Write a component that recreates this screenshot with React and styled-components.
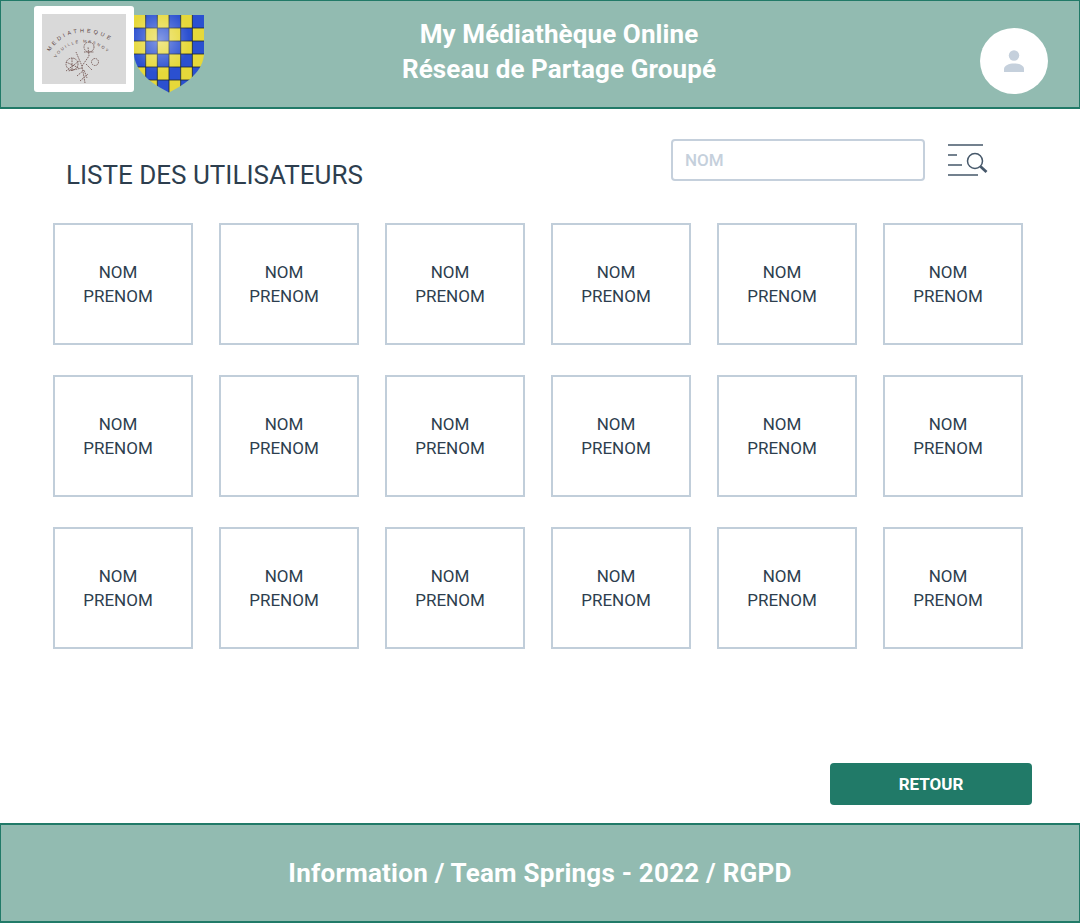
import React from "react";
import styled, { createGlobalStyle } from "styled-components";

const Global = createGlobalStyle`
  html, body { margin: 0; padding: 0; background: #fff; }
  body { font-family: Roboto, "Noto Sans", sans-serif; color: #2d3e4e; }
  * { box-sizing: border-box; }
`;
const Page = styled.div`
  width: 1080px;
  height: 924px;
  display: flex;
  flex-direction: column;
`;
const Header = styled.header`
  height: 109px;
  background: #92bbb1;
  border: 1px solid #217a68;
  border-bottom-width: 2px;
  display: flex;
  align-items: flex-start;
  padding: 5px 31px 0 33px;
`;
const LogoBox = styled.div`
  width: 100px;
  height: 86px;
  background: #fff;
  border-radius: 3px;
  padding: 8px;
  flex: none;
`;
const LogoInner = styled.svg`
  display: block;
  width: 84px;
  height: 70px;
  background: #d9d9d9;
`;
const LogoText = styled.text`
  font-family: "Liberation Sans", sans-serif;
  font-size: ${(p) => p.$size}px;
  letter-spacing: ${(p) => p.$spacing}px;
  fill: #5a4341;
`;
const Shield = styled.svg`
  display: block;
  width: 70px;
  height: 78px;
  margin-top: 9px;
  flex: none;
`;
const Title = styled.h1`
  flex: 1;
  margin: 11px 0 0;
  padding-right: 66px;
  text-align: center;
  font-size: 26px;
  line-height: 35px;
  font-weight: 700;
  letter-spacing: 0.1px;
  color: #fff;
`;
const Avatar = styled.div`
  width: 68px;
  height: 66px;
  margin-top: 22px;
  border-radius: 50%;
  background: #fff;
  display: flex;
  align-items: center;
  justify-content: center;
  flex: none;
`;
const Main = styled.main`
  flex: 1;
  display: flex;
  flex-direction: column;
  padding: 30px 48px 0 53px;
`;
const TopRow = styled.div`
  display: flex;
  align-items: flex-start;
  height: 84px;
`;
const Heading = styled.h2`
  margin: 18px 0 0 13px;
  font-size: 26px;
  line-height: 36px;
  font-weight: 400;
  color: #2d3e4e;
  flex: 1;
`;
const SearchInput = styled.input`
  width: 254px;
  height: 42px;
  border: 2px solid #c5d0dc;
  border-radius: 4px;
  padding: 0 12px;
  font: 500 17px Roboto, sans-serif;
  outline: none;
  flex: none;
  &::placeholder { color: #c5d0dc; opacity: 1; }
`;
const SearchIcon = styled.svg`
  display: block;
  width: 41px;
  height: 34px;
  margin: 4px 43px 0 23px;
  flex: none;
`;
const Grid = styled.div`
  display: grid;
  grid-template-columns: repeat(6, 140px);
  grid-auto-rows: 122px;
  column-gap: 26px;
  row-gap: 30px;
`;
const Card = styled.div`
  border: 2px solid #c1ceda;
  display: flex;
  flex-direction: column;
  align-items: center;
  justify-content: center;
  font-size: 17px;
  line-height: 24px;
  color: #2d3e4e;
  padding-right: 10px;
`;
const Actions = styled.div`
  margin-top: auto;
  display: flex;
  justify-content: flex-end;
  padding: 0 0 18px;
`;
const BackButton = styled.button`
  width: 202px;
  height: 42px;
  border: 0;
  border-radius: 4px;
  background: #217a68;
  color: #fff;
  font: 700 17px Roboto, sans-serif;
  cursor: pointer;
`;
const Footer = styled.footer`
  height: 100px;
  margin-bottom: 1px;
  background: #92bbb1;
  border: 1px solid #217a68;
  border-width: 2px 1px;
  display: flex;
  align-items: center;
  justify-content: center;
  font-size: 26px;
  font-weight: 700;
  letter-spacing: 0.23px;
  color: #fff;
`;

const Logo = () => (
  <LogoInner viewBox="0 0 84 70">
    <defs>
      <path id="outerArc" d="M8 38 C20 14 55 12 76 33" />
      <path id="innerArc" d="M14 44 C26 25 52 23 68 41" />
    </defs>
    <LogoText $size={5.5} $spacing={2.8}>
      <textPath href="#outerArc">MEDIATHEQUE</textPath>
    </LogoText>
    <LogoText $size={4} $spacing={1.8}>
      <textPath href="#innerArc">VOUILLE MESNOY</textPath>
    </LogoText>
    <g fill="none" stroke="#6b4b48" strokeWidth="0.8" strokeDasharray="1.6 0.8">
      <path d="M43 69 L40 52 L34 38 M40 52 L47 42 L46 33 M40 54 L26 57" />
      <circle cx="30" cy="50" r="6" />
      <circle cx="47" cy="33" r="5" />
      <circle cx="53" cy="48" r="3.5" />
      <path d="M24 48 L37 54 M24 57 L37 47 M30 44 L30 57 M35 62 L42 56 L45 64 M38 67 L46 60 M44 50 L50 56 M42 38 L52 38" />
    </g>
  </LogoInner>
);

const ShieldLogo = () => {
  const cells = [];
  for (let r = 0; r < 6; r++) {
    for (let c = 0; c < 6; c++) {
      cells.push(
        <rect
          key={`${r}-${c}`}
          x={c * 11.67}
          y={r * 13}
          width="11.8"
          height="13.1"
          fill={(r + c) % 2 === 0 ? "#e6d83a" : "#2b50d0"}
        />
      );
    }
  }
  const shape = "M0 0 H70 V38 C70 56 52 69 35 77.5 C18 69 0 56 0 38 Z";
  return (
    <Shield viewBox="0 0 70 78">
      <defs>
        <clipPath id="shieldClip"><path d={shape} /></clipPath>
        <radialGradient id="shine" cx="0.37" cy="0.32" r="0.42">
          <stop offset="0" stopColor="#fff" stopOpacity="0.42" />
          <stop offset="1" stopColor="#fff" stopOpacity="0" />
        </radialGradient>
      </defs>
      <g clipPath="url(#shieldClip)">
        {cells}
        <g stroke="#1b2430" strokeWidth="0.8">
          {[1, 2, 3, 4, 5].map((i) => (
            <line key={`v${i}`} x1={i * 11.67} y1="0" x2={i * 11.67} y2="78" />
          ))}
          {[1, 2, 3, 4, 5].map((i) => (
            <line key={`h${i}`} x1="0" y1={i * 13} x2="70" y2={i * 13} />
          ))}
        </g>
        <rect width="70" height="78" fill="url(#shine)" />
      </g>
    </Shield>
  );
};

const names = Array.from({ length: 18 }, (_, i) => i);

export default function App() {
  return (
    <Page>
      <Global />
      <Header>
        <LogoBox><Logo /></LogoBox>
        <ShieldLogo />
        <Title>My Médiathèque Online<br />Réseau de Partage Groupé</Title>
        <Avatar>
          <svg width="22" height="24" viewBox="0 0 22 24" fill="#c5d0dc">
            <circle cx="11" cy="6.5" r="5.2" />
            <path d="M1 23 V20 C1 16.5 6 14.5 11 14.5 C16 14.5 21 16.5 21 20 V23 Z" />
          </svg>
        </Avatar>
      </Header>
      <Main>
        <TopRow>
          <Heading>LISTE DES UTILISATEURS</Heading>
          <SearchInput placeholder="NOM" />
          <SearchIcon viewBox="0 0 41 34" fill="none" stroke="#46586a">
            <path d="M0 2 H35 M0 12 H9 M0 22 H14 M0 32 H30" strokeWidth="1.5" />
            <circle cx="27" cy="18" r="7.5" strokeWidth="1.5" />
            <path d="M32.5 23.5 L38.5 29" strokeWidth="2.8" />
          </SearchIcon>
        </TopRow>
        <Grid>
          {names.map((i) => (
            <Card key={i}><span>NOM</span><span>PRENOM</span></Card>
          ))}
        </Grid>
        <Actions><BackButton>RETOUR</BackButton></Actions>
      </Main>
      <Footer>Information / Team Springs - 2022 / RGPD</Footer>
    </Page>
  );
}
